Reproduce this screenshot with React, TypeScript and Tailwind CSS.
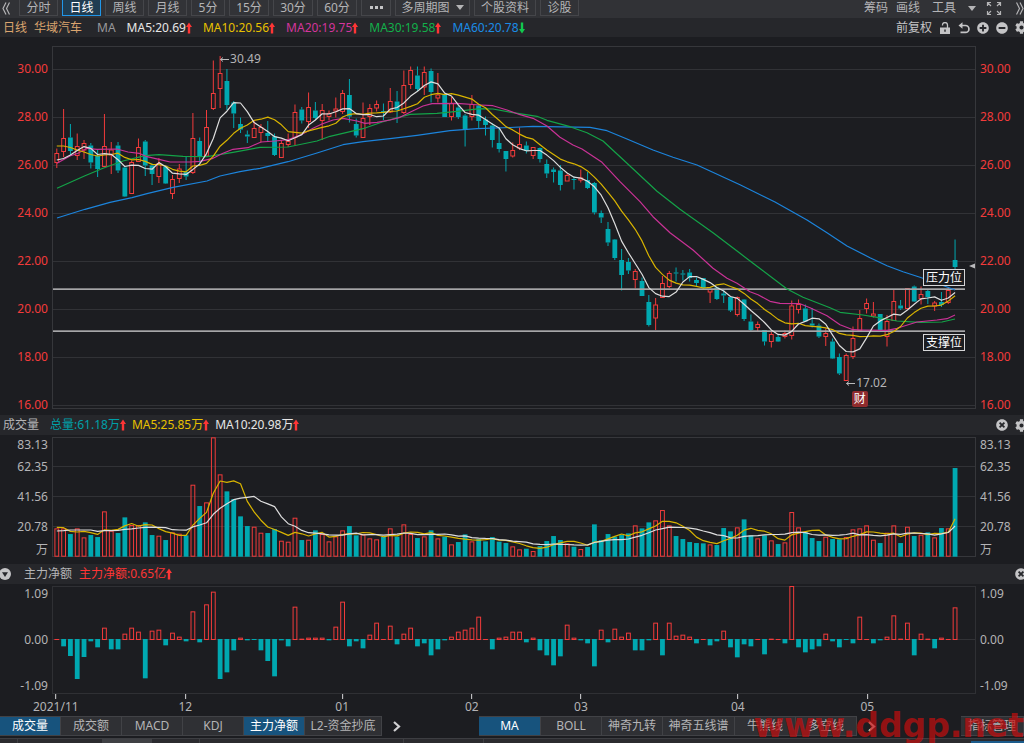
import React from 'react'
import { FaCog, FaMinusCircle, FaPlusCircle, FaTimesCircle } from 'react-icons/fa'
import clsx from 'clsx'

const RED = '#f23b3b'
const TEAL = '#00a8b0'
const FIRST_X = 56.8
const STEP = 6.805
const PLOT_LEFT = 53
const PLOT_WIDTH = 922

const barX = (i: number) => FIRST_X + i * STEP
const barPercent = (i: number) => `${((barX(i) - PLOT_LEFT) / PLOT_WIDTH) * 100}%`

// rising, high, body top, body bottom, low (plot coordinates)
type Candle = [number, number, number, number, number]

const candles: Candle[] = [
  [1, 148.5, 153.5, 162.5, 168], [1, 109, 138.5, 151.5, 157], [0, 124, 137.5, 151, 155], [1, 133.5, 146.5, 155.5, 160],
  [1, 140, 143.5, 150, 159], [0, 143, 145.5, 162.5, 168.5], [0, 150, 156, 169, 177], [1, 114, 146.5, 166.5, 167],
  [1, 142, 150, 155, 174], [0, 142, 145.5, 170.5, 173], [0, 167, 167.5, 196.5, 197], [1, 160.5, 162.5, 193.5, 194],
  [1, 138.5, 147.5, 161.5, 162], [0, 140, 141.5, 165.5, 176], [0, 163.5, 165.5, 174, 185], [1, 158, 163.5, 176.5, 183],
  [0, 165, 166.5, 183.5, 184], [1, 175, 179.5, 193.5, 199], [1, 164, 169, 178.5, 183], [0, 157, 172, 176.5, 180],
  [1, 113, 138.5, 172.5, 174], [0, 137.5, 141, 156.5, 163], [1, 110, 127.5, 156, 157], [1, 60.5, 93.5, 108.5, 110],
  [1, 56, 73.5, 88.5, 108], [0, 69, 81, 105, 110], [0, 101, 102.5, 113.5, 128], [0, 117.5, 124, 129.5, 133],
  [0, 130.5, 134.5, 136.5, 143], [1, 120, 128.5, 137.5, 138], [1, 124, 127.5, 132.5, 142.5], [0, 121, 133, 136, 142],
  [0, 133.5, 136.5, 155, 156], [1, 140, 143.5, 157.5, 158], [1, 133.5, 141.5, 144.5, 147], [1, 104.5, 112.5, 137.5, 145.5],
  [0, 107, 109.5, 120.5, 123.5], [1, 92.5, 107.5, 121.5, 128], [0, 102, 110.5, 118, 120], [1, 104, 110.5, 120.5, 140],
  [1, 110.5, 113.5, 116.5, 120.5], [1, 97.5, 109, 111, 117.5], [1, 90, 93.5, 111.5, 114], [0, 79, 95, 116.5, 122.5],
  [0, 118.5, 124, 135.5, 137.5], [1, 102.5, 118.5, 137.5, 138], [1, 104, 108.5, 116.5, 125], [1, 100.5, 104.5, 108, 111.5],
  [0, 103.5, 111, 113, 120], [1, 88, 101.5, 112, 113], [0, 91, 101.5, 110, 123], [1, 70.5, 85.5, 112.5, 114],
  [1, 66.5, 70.5, 84.5, 89], [0, 66.5, 75.5, 89, 91], [1, 66.5, 72.5, 87, 95], [0, 68.5, 71, 92, 102.5],
  [1, 73, 95, 98, 102.5], [0, 94, 94.5, 117, 117], [1, 97, 103.5, 116.5, 120.5], [0, 105, 107.5, 117, 119],
  [0, 114, 115.5, 130, 146.5], [1, 95, 104.5, 116.5, 120.5], [0, 104, 105.5, 121, 128], [0, 116.5, 119.5, 125, 135.5],
  [0, 123, 125.5, 140, 147.5], [0, 128, 143, 149, 152.5], [0, 151, 151, 159, 171.5], [1, 142.5, 150.5, 156, 157.5],
  [1, 127.5, 144.5, 148, 150], [0, 141.5, 145.5, 151, 153.5], [1, 147, 147.5, 155.5, 159], [0, 147.5, 148, 159, 162.5],
  [0, 159.5, 164, 173.5, 178], [0, 167.5, 169.5, 172, 182.5], [0, 165, 170.5, 185, 190.5], [1, 173.5, 175.5, 181, 181],
  [0, 176.5, 179, 180, 189.5], [1, 169.5, 178, 180, 182.5], [0, 172, 180, 188, 189], [0, 182, 183, 212.5, 214.5],
  [0, 210.5, 213, 217.5, 223], [0, 222, 229, 242.5, 246], [0, 239, 239.5, 258, 260], [0, 249, 260, 275, 290.5],
  [0, 258, 262, 270.5, 274], [1, 269, 271.5, 279.5, 288.5], [0, 277.5, 281, 296, 296], [0, 295, 302, 325, 326.5],
  [1, 298, 305, 318, 330], [1, 276, 283.5, 297.5, 298], [1, 271, 273.5, 286.5, 288], [0, 267.5, 272.5, 273.5, 281.5],
  [0, 270, 273.5, 274.5, 280.5], [0, 269, 272.5, 278, 281.5], [0, 277.5, 280, 283, 286.5], [0, 278, 278, 288, 289],
  [1, 289, 289.5, 292, 303], [0, 287, 287.5, 299, 300], [0, 290, 293.5, 295.5, 303], [0, 297, 297, 310.5, 312],
  [1, 296.5, 297.5, 314.5, 316.5], [0, 299, 299.5, 319, 321], [0, 314.5, 321.5, 330, 331], [1, 321.5, 324.5, 327.5, 331.5],
  [0, 330, 330, 341.5, 345.5], [1, 331.5, 334.5, 341.5, 347.5], [0, 334.5, 337, 341.5, 342], [1, 330.5, 333.5, 336.5, 338.5],
  [1, 300.5, 306, 335.5, 339.5], [1, 299.5, 304.5, 309.5, 313.5], [0, 304.5, 308.5, 321.5, 322], [0, 308, 323.5, 325.5, 327.5],
  [0, 323.5, 325.5, 336.5, 338], [1, 328.5, 333.5, 336.5, 346], [0, 338.5, 341.5, 358.5, 359], [0, 353.5, 357, 373.5, 375],
  [1, 353.5, 355.5, 380.5, 381], [1, 326.5, 338.5, 356.5, 359], [1, 310, 318.5, 330.5, 331], [1, 298.5, 303.5, 308.5, 313.5],
  [1, 302, 314, 316, 317.5], [0, 314, 314, 330, 331], [1, 315, 321.5, 336.5, 346.5], [1, 290, 301.5, 320.5, 321],
  [0, 300, 305.5, 308.5, 310], [1, 288, 288.5, 308.5, 309], [0, 285.5, 286.5, 301.5, 302], [1, 286.5, 294.5, 298.5, 304.5],
  [0, 289, 291, 297, 304], [1, 301, 303, 306, 311], [0, 292, 302, 305, 307], [1, 288, 290.5, 302.5, 304],
  [0, 239.5, 260, 267, 270],
]

// bar heights, three units to a pixel
const volumes = [
  85, 85, 68, 85, 58, 65, 59, 136, 78, 71, 118, 95, 95, 103, 65, 63, 50, 73, 69, 64, 216, 152, 163, 358, 247, 196, 173, 121, 92, 90,
  72, 71, 83, 48, 45, 117, 50, 51, 79, 68, 46, 61, 79, 92, 64, 67, 55, 52, 60, 85, 60, 97, 68, 56, 61, 79, 55, 60, 37, 44,
  67, 46, 53, 46, 59, 45, 41, 31, 22, 24, 17, 32, 47, 62, 50, 40, 30, 23, 29, 97, 50, 68, 60, 65, 70, 94, 85, 103, 109, 140,
  94, 62, 53, 44, 41, 40, 37, 35, 86, 76, 88, 112, 64, 55, 64, 49, 38, 43, 134, 88, 74, 56, 47, 60, 53, 52, 59, 82, 85, 94,
  51, 41, 72, 94, 41, 90, 62, 66, 73, 58, 86, 85, 266,
]

const netFlows = [
  0, -22, -51, -120, -54, -7, -25, 37, -31, -31, 19, 37, 25, -118, 28, 31, -19, 22, 10, -7, 86, -10, 107, 145, -120, -100, -34, 7, -4, -1,
  -34, -66, -112, -4, -22, 100, 4, 7, 7, 7, -4, 40, 115, -22, -7, -28, 16, 52, 1, 43, -16, 19, 37, -22, -13, -49, -31, -4, 10, 25,
  31, 37, 70, 1, -31, 7, 10, 25, 25, -10, 7, -34, -49, -79, -52, 46, 7, -4, -13, -82, 31, -10, 34, 10, 22, -34, -34, -4, 52, -49,
  52, 13, 16, 10, -13, 1, -19, -7, 28, -25, -55, -16, -22, 1, -46, 4, 1, -13, 162, -25, -40, -31, -22, 19, -7, -25, -1, -13, 70, 1,
  -13, -4, 10, 74, 4, 52, -49, 19, 4, -28, 7, 1, 98,
]

const ma20 =
  '57,163.3 70,156 78,153.3 87,148.3 97,149.3 117,149 128,152 139,153.3 147,156.7 159,159.3 170,162 190,162 200,161.3 213,158.3 223,153.3 233,149.3 248,147.7 261,142 275,141 288,139.7 302,134.3 313,128.3 322,124 333,120 343,118.3 357,121 365,123.3 377,122.3 390,120 400,117.3 410,112.3 423,106 432,103.7 457,103.3 480,105 493,105.7 507,110 520,114.7 533,118.3 547,126 560,137.3 573,145 582,149 602,162.3 620,181.7 640,201.7 653,216.7 670,232.7 693,250 713,268.3 727,278.3 737,283.3 750,291.7 758,294.7 770,301.3 780,303.3 800,303.7 810,307.7 827,315.7 840,324.7 853,329.7 863,330 887,330.3 897,328.3 917,322 937,320 947,318.7 955,315'
const ma30 =
  '57,188.3 85,175.7 103,168.3 123,161 145,155.7 159,154.7 183,156.3 207,156.7 233,152.3 260,147.3 288,147 317,141 330,136.3 363,128.7 383,121.7 410,114.3 437,113.3 457,111.3 480,108.7 493,109 513,112.7 537,116.3 547,120.3 570,126.7 587,132.7 603,141 627,163.3 657,191.3 680,209.3 713,232.7 740,253.3 753,263.3 787,289 803,297.3 830,307.7 840,312.3 863,315 877,317.3 897,321 920,322.3 942,322 955,319'
const ma60 =
  '57,218 85,209.3 110,202.3 132,197.7 147,193.7 173,187.3 207,181 220,176 240,171.7 260,168.3 288,161.7 317,153 343,144.7 363,141.7 390,138.7 417,135.3 450,130.7 477,128.7 510,127.5 533,126.3 590,127.3 607,130.7 627,139 653,150 673,157.3 697,165 740,184.7 775,202 807,220 827,232.7 847,246 870,257.7 887,265.7 903,271.7 920,277.3 937,283.3 955,290'

const average = (values: number[], size: number, head: number[]) =>
  values.map((_, i) =>
    i < head.length ? head[i] : values.slice(i - size + 1, i + 1).reduce((a, b) => a + b, 0) / size
  )

const toPoints = (values: number[]) => values.map((v, i) => `${barX(i).toFixed(1)},${v.toFixed(1)}`).join(' ')

const closes = candles.map(([up, , top, bottom]) => (up ? top : bottom))
const ma5 = toPoints(average(closes, 5, [160, 158.5, 155, 150.5]))
const ma10 = toPoints(average(closes, 10, [146, 146, 147.5, 150, 152, 154.5, 156, 155, 154.5]))

const volumeY = (v: number) => 556.7 - v / 3
const volumeMa5 = toPoints(average(volumes, 5, [88, 87, 76, 74]).map(volumeY))
const volumeMa10 = toPoints(average(volumes, 10, [77, 78, 80, 80, 80, 80, 76, 78, 78]).map(volumeY))

const months: [number, string][] = [
  [0, '2021/11'],
  [19, '12'],
  [42, '01'],
  [61, '02'],
  [77, '03'],
  [100, '04'],
  [119, '05'],
]

interface LineProps {
  points: string
  color: string
}

const Line: React.FC<LineProps> = ({ points, color }) => (
  <polyline points={points} fill="none" stroke={color} strokeWidth="1.2" strokeLinejoin="round" />
)

const Grid: React.FC<{ rows: number[] }> = ({ rows }) => (
  <>
    {rows.map((y) => (
      <rect key={y} x={PLOT_LEFT} y={y} width={PLOT_WIDTH} height="1" fill="#313236" />
    ))}
  </>
)

interface BarProps {
  x: number
  top: number
  height: number
  hollow: boolean
}

const Bar: React.FC<BarProps> = ({ x, top, height, hollow }) => {
  if (!hollow) {
    return <rect x={x - 2.4} y={top} width="4.8" height={Math.max(height, 1)} fill={TEAL} />
  }
  if (height < 2) {
    return <rect x={x - 2.4} y={top} width="4.8" height={Math.max(height, 1)} fill={RED} />
  }
  return <rect x={x - 1.9} y={top + 0.5} width="3.8" height={height - 1} fill="none" stroke={RED} strokeWidth="1" />
}

const ArrowUp: React.FC = () => (
  <svg width="6" height="12" viewBox="0 0 6 12" fill="#ff3535" aria-hidden="true">
    <path d="M3 0.5 6 5H4.2V11.5H1.8V5H0z" />
  </svg>
)

const ArrowDown: React.FC = () => (
  <svg width="6" height="12" viewBox="0 0 6 12" fill="#12c94e" aria-hidden="true">
    <path d="M3 11.5 6 7H4.2V0.5H1.8V7H0z" />
  </svg>
)

const Caret: React.FC = () => (
  <svg width="8" height="5" viewBox="0 0 8 5" fill="currentColor" aria-hidden="true">
    <path d="M0 0h8L4 5z" />
  </svg>
)

const DoubleChevron: React.FC<{ flip?: boolean }> = ({ flip }) => (
  <svg
    width="8"
    height="13"
    viewBox="0 0 8 13"
    fill="none"
    stroke="currentColor"
    strokeWidth="1.2"
    className={clsx(flip && 'rotate-180')}
    aria-hidden="true"
  >
    <path d="M4 0.5 1 6.5 4 12.5M7.5 0.5 4.5 6.5 7.5 12.5" />
  </svg>
)

const Chevron: React.FC = () => (
  <svg width="8" height="11" viewBox="0 0 8 11" fill="none" stroke="#d0d0d2" strokeWidth="2.2" aria-hidden="true">
    <path d="M1 1l5 4.5L1 10" />
  </svg>
)

const ExpandIcon: React.FC = () => (
  <svg width="16" height="15" viewBox="0 0 16 15" fill="none" stroke="currentColor" strokeWidth="1.2" aria-hidden="true">
    <path d="M1.5 5V1.5H5M1.5 1.5l3.500 3.500M11 1.5h3.500V5M14.500 1.500l-3.500 3.500M1.500 10v3.500H5M1.500 13.500l3.500-3.500M11 13.500h3.500V10M14.500 13.500l-3.500-3.500" />
  </svg>
)

const UnlockIcon: React.FC = () => (
  <svg width="12" height="12" viewBox="0 0 12 12" aria-hidden="true">
    <path d="M3.500 3.500V3a2.500 2.500 0 0 1 5 0v3" fill="none" stroke="currentColor" strokeWidth="1.3" />
    <path fillRule="evenodd" d="M1 5.500h10V12H1zM5.300 7.500v2.300h1.400V7.500z" fill="currentColor" />
  </svg>
)

const UndoIcon: React.FC = () => (
  <svg width="12" height="12" viewBox="0 0 12 12" aria-hidden="true">
    <path d="M0.500 3.500 4.500 0.300v6.400z" fill="currentColor" />
    <path d="M3.500 3.500h4a3.400 3.400 0 0 1 0 6.900H2.500" fill="none" stroke="currentColor" strokeWidth="1.700" />
  </svg>
)

const DownCircle: React.FC = () => (
  <svg width="12" height="12" viewBox="0 0 12 12" aria-hidden="true">
    <circle cx="6" cy="6" r="6" fill="#c4c4c6" />
    <path d="M3 4.300h6L6 9z" fill="#26272b" />
  </svg>
)

const LeftArrow: React.FC = () => (
  <svg width="9" height="5" viewBox="0 0 9 5" fill="none" stroke="#b9b9bb" strokeWidth="1" aria-hidden="true">
    <path d="M0.500 2.500H9M3 0.500l-2.500 2 2.500 2" />
  </svg>
)

interface ReadingProps {
  label: string
  className: string
  down?: boolean
}

const Reading: React.FC<ReadingProps> = ({ label, className, down }) => (
  <span className={clsx('flex items-center', className)}>
    {label}
    {down ? <ArrowDown /> : <ArrowUp />}
  </span>
)

const periods: { label: string; width: string; active?: boolean }[] = [
  { label: '分时', width: 'w-[39px]' },
  { label: '日线', width: 'w-[39px]', active: true },
  { label: '周线', width: 'w-[39px]' },
  { label: '月线', width: 'w-[39px]' },
  { label: '5分', width: 'w-[34px]' },
  { label: '15分', width: 'w-[40px]' },
  { label: '30分', width: 'w-[40px]' },
  { label: '60分', width: 'w-[40px]' },
]

const toolButton = 'flex h-4 items-center justify-center border border-t-0 border-[#45464a] bg-[#323337]'

const Toolbar: React.FC = () => (
  <nav className="flex h-[18px] items-start justify-between overflow-hidden bg-[#313236] whitespace-nowrap">
    <div className="flex gap-1">
      <button className="flex h-4 w-[15px] items-center pl-[2px]" aria-label="向左">
        <DoubleChevron />
      </button>
      {periods.map(({ label, width, active }) => (
        <button
          key={label}
          className={clsx(
            'flex h-4 items-center justify-center border border-t-0',
            width,
            active ? 'border-[#2196e8] bg-[#203d52] text-white' : 'border-[#45464a] bg-[#323337]'
          )}
        >
          {label}
        </button>
      ))}
      <button className={clsx(toolButton, 'w-[30px] gap-[2px]')} aria-label="更多">
        <i className="size-[3px] bg-[#c4c4c6]" />
        <i className="size-[3px] bg-[#c4c4c6]" />
        <i className="size-[3px] bg-[#c4c4c6]" />
      </button>
      <button className={clsx(toolButton, 'w-[75px] gap-[6px]')}>
        多周期图
        <Caret />
      </button>
      <button className={clsx(toolButton, 'w-[62px]')}>个股资料</button>
      <button className={clsx(toolButton, 'w-[39px]')}>诊股</button>
    </div>
    <div className="flex h-4 items-center">
      <button className="mr-2">筹码</button>
      <button className="mr-3">画线</button>
      <button className="mr-[10px] flex items-center gap-3">
        工具
        <Caret />
      </button>
      <button className="mr-[14px]" aria-label="全屏">
        <ExpandIcon />
      </button>
      <button aria-label="向右">
        <DoubleChevron flip />
      </button>
    </div>
  </nav>
)

const PriceHeader: React.FC = () => (
  <header className="flex h-[19px] items-center justify-between overflow-hidden bg-[#26272b] pl-[3px] whitespace-nowrap">
    <div className="flex items-center gap-[11px]">
      <span className="flex gap-[7px] text-[#dba56f]">
        <span>日线</span>
        <span>华域汽车</span>
      </span>
      <span className="ml-1 text-[#98989b]">MA</span>
      <Reading label="MA5:20.69" className="text-[#e6e6e6]" />
      <Reading label="MA10:20.56" className="text-[#e8c100]" />
      <Reading label="MA20:19.75" className="text-[#d3359c]" />
      <Reading label="MA30:19.58" className="text-[#12b04a]" />
      <Reading label="MA60:20.78" className="text-[#1b8ce6]" down />
    </div>
    <div className="-mr-1 flex items-center gap-[7px] text-[#c4c4c6]">
      <button>前复权</button>
      <button aria-label="解锁">
        <UnlockIcon />
      </button>
      <button aria-label="撤销">
        <UndoIcon />
      </button>
      <button aria-label="放大">
        <FaPlusCircle size={12} />
      </button>
      <button aria-label="缩小">
        <FaMinusCircle size={12} />
      </button>
      <button aria-label="设置">
        <FaCog size={13} />
      </button>
    </div>
  </header>
)

const PriceAxis: React.FC<{ className: string }> = ({ className }) => (
  <div className={clsx('flex shrink-0 flex-col gap-8 pt-[15px] text-[#f23b3b]', className)}>
    {['30.00', '28.00', '26.00', '24.00', '22.00', '20.00', '18.00', '16.00'].map((price) => (
      <span key={price} className="h-4">
        {price}
      </span>
    ))}
  </div>
)

const PricePanel: React.FC = () => (
  <section className="flex h-[378px] pt-[9px]">
    <PriceAxis className="w-[52px] pr-1 text-right" />
    <div className="relative h-[363px] min-w-0 flex-1 border border-[#36373b]">
      <svg className="block size-full" viewBox="53 47 922 361" preserveAspectRatio="none">
        <Grid rows={[69, 117, 165, 213, 261, 309, 357, 405]} />
        {candles.map(([up, high, top, bottom, low], i) => {
          const x = barX(i)
          const color = up ? RED : TEAL
          return (
            <g key={i}>
              <path d={`M${x} ${high}V${top}M${x} ${bottom}V${low}`} stroke={color} strokeWidth="1" />
              <Bar x={x} top={up ? top - 0.5 : top} height={bottom - top + (up ? 1 : 0)} hollow={!!up} />
            </g>
          )
        })}
        <rect x="53" y="288.300" width="912" height="1.700" fill="#a6a6a8" />
        <rect x="53" y="330.300" width="912" height="1.700" fill="#a6a6a8" />
        <Line points={ma60} color="#1c84dc" />
        <Line points={ma30} color="#14a348" />
        <Line points={ma20} color="#c93296" />
        <Line points={ma10} color="#d9b400" />
        <Line points={ma5} color="#dedede" />
        <path d="M975 263.500v5l-6-2.500z" fill="#b9b9bb" />
      </svg>
      <span className="absolute top-1 flex items-center gap-px leading-4" style={{ left: barPercent(24) }}>
        <LeftArrow />
        30.49
      </span>
      <span className="absolute top-[328px] flex items-center gap-px leading-4" style={{ left: barPercent(116) }}>
        <LeftArrow />
        17.02
      </span>
      <span
        className="absolute top-[344px] flex size-4 -translate-x-1/2 items-center justify-center rounded-xs bg-[#8f2b2d] text-white"
        style={{ left: barPercent(118) }}
      >
        财
      </span>
      <span className="absolute top-[222px] right-[10px] flex h-[17px] w-[42px] items-center justify-center border border-[#d6d6d8] bg-[#1c1d21] text-white">
        压力位
      </span>
      <span className="absolute top-[287px] right-[10px] flex h-[17px] w-[42px] items-center justify-center border border-[#d6d6d8] bg-[#1c1d21] text-white">
        支撑位
      </span>
    </div>
    <PriceAxis className="w-12 pl-1" />
  </section>
)

const VolumeAxis: React.FC<{ className: string }> = ({ className }) => (
  <div className={clsx('flex shrink-0 flex-col', className)}>
    <span className="h-[22px]">83.13</span>
    <span className="h-[30px]">62.35</span>
    <span className="h-[30px]">41.56</span>
    <span className="h-[23px]">20.78</span>
    <span>万</span>
  </div>
)

const VolumePanel: React.FC = () => (
  <section>
    <header className="flex h-5 items-center justify-between overflow-hidden bg-[#26272b] pl-[3px] whitespace-nowrap">
      <div className="flex items-center gap-[6px]">
        <h2 className="mr-[5px]">成交量</h2>
        <Reading label="总量:61.18万" className="text-[#00a0a8]" />
        <Reading label="MA5:25.85万" className="text-[#e8c100]" />
        <Reading label="MA10:20.98万" className="text-[#e6e6e6]" />
      </div>
      <div className="-mr-1 flex items-center gap-[7px] text-[#c4c4c6]">
        <button aria-label="关闭成交量">
          <FaTimesCircle size={12} />
        </button>
        <button aria-label="设置成交量">
          <FaCog size={13} />
        </button>
      </div>
    </header>
    <div className="flex h-[129px] pt-[2px]">
      <VolumeAxis className="w-[52px] pr-1 text-right" />
      <div className="h-[120px] min-w-0 flex-1 border border-[#36373b]">
        <svg className="block size-full overflow-visible" viewBox="53 438 922 118" preserveAspectRatio="none">
          <Grid rows={[466, 496, 526]} />
          {volumes.map((v, i) => (
            <Bar key={i} x={barX(i)} top={volumeY(v)} height={v / 3} hollow={!!candles[i][0]} />
          ))}
          <Line points={volumeMa5} color="#d9b400" />
          <Line points={volumeMa10} color="#dedede" />
        </svg>
      </div>
      <VolumeAxis className="w-12 pl-1" />
    </div>
  </section>
)

const FlowAxis: React.FC<{ className: string }> = ({ className }) => (
  <div className={clsx('flex h-[108px] shrink-0 flex-col justify-between', className)}>
    <span>1.09</span>
    <span>0.00</span>
    <span>-1.09</span>
  </div>
)

const FlowPanel: React.FC = () => (
  <section>
    <header className="flex h-5 items-center justify-between overflow-hidden bg-[#26272b] whitespace-nowrap">
      <div className="flex items-center gap-[7px]">
        <button className="-ml-px mr-[6px]" aria-label="收起">
          <DownCircle />
        </button>
        <h2>主力净额</h2>
        <Reading label="主力净额:0.65亿" className="text-[#ff3535]" />
      </div>
      <button className="-mr-[3px] text-[#c4c4c6]" aria-label="关闭主力净额">
        <FaTimesCircle size={12} />
      </button>
    </header>
    <div className="flex pt-[2px]">
      <FlowAxis className="w-[52px] pr-1 text-right" />
      <div className="min-w-0 flex-1">
        <div className="h-[108px] border border-[#2f3034]">
          <svg className="block size-full overflow-visible" viewBox="53 587 922 106" preserveAspectRatio="none">
            <Grid rows={[639]} />
            {netFlows.map((v, i) => (
              <Bar key={i} x={barX(i)} top={v >= 0 ? 640 - Math.max(v / 3, 1) : 639} height={Math.abs(v) / 3} hollow={v >= 0} />
            ))}
          </svg>
        </div>
        <div className="relative h-[22px]">
          {months.map(([index, label]) => (
            <div
              key={label}
              className="absolute top-0 flex -translate-x-1/2 flex-col items-center"
              style={{ left: barPercent(index) }}
            >
              <i className="h-[5px] w-px bg-[#d6d6d8]" />
              <span>{label}</span>
            </div>
          ))}
        </div>
      </div>
      <FlowAxis className="w-12 pl-1" />
    </div>
  </section>
)

interface TabProps {
  label: string
  width?: string
  active?: boolean
}

const Tab: React.FC<TabProps> = ({ label, width = 'w-[61px]', active }) => (
  <button
    className={clsx(
      'flex h-5 shrink-0 items-center justify-center border border-l-0 border-[#414246]',
      width,
      active ? 'bg-[#17537d] text-white' : 'bg-[#2f3034]'
    )}
  >
    {label}
  </button>
)

const IndicatorTabs: React.FC = () => (
  <footer className="relative">
    <div className="flex h-5 whitespace-nowrap">
      <Tab label="成交量" active />
      <Tab label="成交额" />
      <Tab label="MACD" />
      <Tab label="KDJ" />
      <Tab label="主力净额" active />
      <Tab label="L2-资金抄底" width="w-[77px]" />
      <button className="flex w-[97px] items-center pl-[11px]" aria-label="更多副图指标">
        <Chevron />
      </button>
      <Tab label="MA" width="w-[62px]" active />
      <Tab label="BOLL" />
      <Tab label="神奇九转" />
      <Tab label="神奇五线谱" width="w-[72px]" />
      <Tab label="牛熊线" />
      <Tab label="多空线" />
      <button className="flex grow items-center pl-[11px]" aria-label="更多主图指标">
        <Chevron />
      </button>
      <Tab label="指标管理" width="w-[63px]" />
    </div>
    <div className="mt-[2px] flex h-[5px] border-t border-[#3d3e42] bg-[#2b2b2f]">
      <i className="w-[18px] border-r border-[#3d3e42]" />
      <i className="w-[84px]" />
      <i className="w-[50px] bg-[#3f4044]" />
      <i className="w-12 border-r border-[#3d3e42]" />
      <i className="w-[204px] border-r border-[#3d3e42]" />
      <i className="w-20 border-r border-[#3d3e42]" />
      <i className="grow" />
      <i className="mt-[2px] w-[53px] bg-[#1c5c8c]" />
    </div>
    <span className="pointer-events-none absolute right-0 bottom-0 font-['DejaVu_Sans',sans-serif] text-[33px] leading-[34px] font-bold text-[#c80d0d]/70">
      www.ddgp.net
    </span>
  </footer>
)

const App: React.FC = () => (
  <main className="overflow-hidden bg-[#1c1d21] font-['Noto_Sans','Noto_Sans_CJK_SC',sans-serif] text-xs leading-4 text-[#b4b4b6]">
    <Toolbar />
    <PriceHeader />
    <PricePanel />
    <VolumePanel />
    <FlowPanel />
    <IndicatorTabs />
  </main>
)

export default App
